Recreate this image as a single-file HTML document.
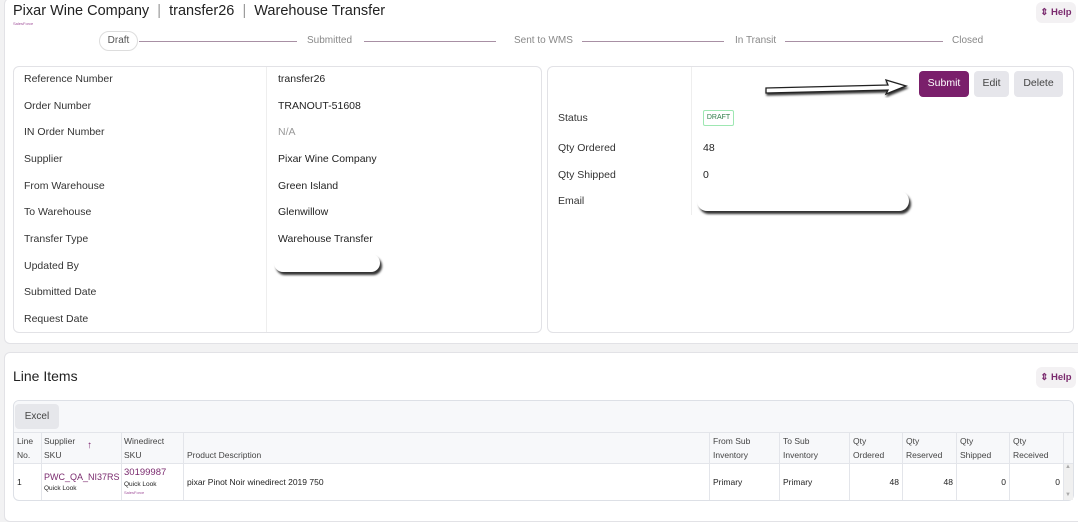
<!DOCTYPE html><html><head><style>
*{box-sizing:border-box;margin:0;padding:0}
html,body{width:1078px;height:508px}
body{background:#f2f2f3;font-family:"Liberation Sans",sans-serif;color:#222;position:relative;overflow:hidden;font-size:10.5px}
.a{position:absolute}
.card{background:#fff;border:1px solid #e2e2e6;border-radius:6px}
.lbl{position:absolute;left:24px;font-size:10.5px;color:#333}
.val{position:absolute;left:278px;font-size:10.5px;color:#222}
.step{position:absolute;top:35px;font-size:10px;color:#888}
.line{position:absolute;top:41px;height:1px;background:#a890a4}
.btn{position:absolute;border-radius:4px;font-size:10.5px;text-align:center;line-height:25px}
.th{position:absolute;top:434px;font-size:8.5px;color:#444;line-height:14px}
.td{position:absolute;font-size:8.5px;color:#222}
.vl{position:absolute;top:432px;height:68px;width:1px;background:#e3e5ea}
.pill{position:absolute;background:#fff;border-radius:10px;box-shadow:2px 3px 2px #333}
</style></head><body>
<div class="a card" style="left:4px;top:-2px;width:1090px;height:346px;border-radius:6px"></div>
<div class="a" style="left:13px;top:3px;font-size:14.5px;color:#222">Pixar Wine Company &nbsp;<span style="color:#999">|</span>&nbsp; transfer26 &nbsp;<span style="color:#999">|</span>&nbsp; Warehouse Transfer</div>
<div class="a" style="left:13px;top:21px;font-size:4px;color:#a0509a">SalesForce</div>
<div class="btn" style="left:1036px;top:2px;width:40px;height:21px;line-height:21px;background:#f3f1f3;color:#7a2a6e;font-size:9.5px;font-weight:bold;border-radius:6px">⇕ Help</div>
<div class="a" style="left:99px;top:31px;width:39px;height:20px;border:1px solid #ddd;border-radius:10px;text-align:center;line-height:18px;font-size:10px;color:#555">Draft</div>
<div class="line" style="left:139px;width:158px"></div>
<div class="step" style="left:307px">Submitted</div>
<div class="line" style="left:364px;width:132px"></div>
<div class="step" style="left:514px">Sent to WMS</div>
<div class="line" style="left:582px;width:142px"></div>
<div class="step" style="left:735px">In Transit</div>
<div class="line" style="left:785px;width:158px"></div>
<div class="step" style="left:952px">Closed</div>
<div class="a card" style="left:13px;top:66px;width:529px;height:267px"></div>
<div class="a" style="left:266px;top:67px;width:1px;height:265px;background:#eee"></div>
<div class="a card" style="left:547px;top:66px;width:527px;height:267px"></div>
<div class="a" style="left:691px;top:67px;width:1px;height:148px;background:#eee"></div>
<div class="lbl" style="top:73px">Reference Number</div><div class="val" style="top:73px">transfer26</div>
<div class="lbl" style="top:100px">Order Number</div><div class="val" style="top:100px">TRANOUT-51608</div>
<div class="lbl" style="top:126px">IN Order Number</div><div class="val" style="top:126px;color:#999">N/A</div>
<div class="lbl" style="top:153px">Supplier</div><div class="val" style="top:153px">Pixar Wine Company</div>
<div class="lbl" style="top:180px">From Warehouse</div><div class="val" style="top:180px">Green Island</div>
<div class="lbl" style="top:206px">To Warehouse</div><div class="val" style="top:206px">Glenwillow</div>
<div class="lbl" style="top:233px">Transfer Type</div><div class="val" style="top:233px">Warehouse Transfer</div>
<div class="lbl" style="top:260px">Updated By</div>
<div class="lbl" style="top:286px">Submitted Date</div>
<div class="lbl" style="top:313px">Request Date</div>
<div class="pill" style="left:274px;top:254px;width:106px;height:18px"></div>
<div class="lbl" style="left:558px;top:112px">Status</div>
<div class="a" style="left:703px;top:110px;width:31px;height:16px;border:1px solid #9ee7b2;border-radius:2px;font-size:7px;color:#2e7d47;text-align:center;line-height:14px">DRAFT</div>
<div class="lbl" style="left:558px;top:142px">Qty Ordered</div><div class="val" style="left:703px;top:142px">48</div>
<div class="lbl" style="left:558px;top:169px">Qty Shipped</div><div class="val" style="left:703px;top:169px">0</div>
<div class="lbl" style="left:558px;top:195px">Email</div>
<div class="pill" style="left:697px;top:191px;width:212px;height:20px"></div>
<svg class="a" style="left:760px;top:74px" width="150" height="24"><path d="M6 14 L128 11 L126 6 L146 12 L126 20 L128 16 L6 19 Z" fill="#fff" stroke="#222" stroke-width="1.3" style="filter:drop-shadow(1px 2px 1px #333)"/></svg>
<div class="btn" style="left:919px;top:71px;width:50px;height:26px;background:#7a1f6b;color:#fff">Submit</div>
<div class="btn" style="left:974px;top:71px;width:35px;height:26px;background:#e6e6eb;color:#444">Edit</div>
<div class="btn" style="left:1014px;top:71px;width:49px;height:26px;background:#e6e6eb;color:#444">Delete</div>
<div class="a card" style="left:4px;top:352px;width:1090px;height:170px"></div>
<div class="a" style="left:13px;top:368px;font-size:14px;color:#222">Line Items</div>
<div class="btn" style="left:1036px;top:367px;width:40px;height:21px;line-height:21px;background:#f3f1f3;color:#7a2a6e;font-size:9.5px;font-weight:bold;border-radius:6px">⇕ Help</div>
<div class="a" style="left:13px;top:400px;width:1061px;height:101px;border:1px solid #dde0e6;border-radius:6px;background:#fff;overflow:hidden">
<div class="a" style="left:0;top:0;width:1061px;height:63px;background:#f7f8fa;border-bottom:1px solid #e3e5ea"></div>
<div class="a" style="left:0;top:31px;width:1061px;height:1px;background:#e3e5ea"></div>
</div>
<div class="btn" style="left:15px;top:404px;width:44px;height:25px;background:#e6e7eb;color:#444;font-size:10px">Excel</div>
<div class="vl" style="left:41px"></div><div class="vl" style="left:121px"></div><div class="vl" style="left:183px"></div><div class="vl" style="left:709px"></div><div class="vl" style="left:779px"></div><div class="vl" style="left:849px"></div><div class="vl" style="left:902px"></div><div class="vl" style="left:956px"></div><div class="vl" style="left:1009px"></div><div class="vl" style="left:1063px"></div>
<div class="th" style="left:17px">Line<br>No.</div>
<div class="th" style="left:44px">Supplier<br>SKU</div><div class="a" style="left:87px;top:440px;font-size:10px;color:#7a1f6b">↑</div>
<div class="th" style="left:124px">Winedirect<br>SKU</div>
<div class="th" style="left:187px;top:448px">Product Description</div>
<div class="th" style="left:713px">From Sub<br>Inventory</div>
<div class="th" style="left:783px">To Sub<br>Inventory</div>
<div class="th" style="left:853px">Qty<br>Ordered</div>
<div class="th" style="left:906px">Qty<br>Reserved</div>
<div class="th" style="left:960px">Qty<br>Shipped</div>
<div class="th" style="left:1013px">Qty<br>Received</div>
<div class="td" style="left:17px;top:477px">1</div>
<div class="td" style="left:44px;top:472px;color:#7a2a6e;font-size:9px">PWC_QA_NI37RS</div>
<div class="td" style="left:44px;top:485px;font-size:6.5px">Quick Look</div>
<div class="td" style="left:124px;top:467px;color:#7a2a6e;font-size:9.5px">30199987</div>
<div class="td" style="left:124px;top:481px;font-size:6.5px">Quick Look</div>
<div class="td" style="left:124px;top:490px;font-size:4px;color:#a0509a">SalesForce</div>
<div class="td" style="left:187px;top:477px">pixar Pinot Noir winedirect 2019 750</div>
<div class="td" style="left:713px;top:477px">Primary</div>
<div class="td" style="left:783px;top:477px">Primary</div>
<div class="td" style="left:853px;top:477px;width:46px;text-align:right">48</div>
<div class="td" style="left:906px;top:477px;width:47px;text-align:right">48</div>
<div class="td" style="left:960px;top:477px;width:46px;text-align:right">0</div>
<div class="td" style="left:1013px;top:477px;width:47px;text-align:right">0</div>
<div class="a" style="left:1064px;top:464px;width:9px;height:36px;background:#f0f0f0"></div>
<div class="a" style="left:1065px;top:464px;font-size:6px;color:#aaa">▲</div>
<div class="a" style="left:1065px;top:492px;font-size:6px;color:#aaa">▼</div>
</body></html>
